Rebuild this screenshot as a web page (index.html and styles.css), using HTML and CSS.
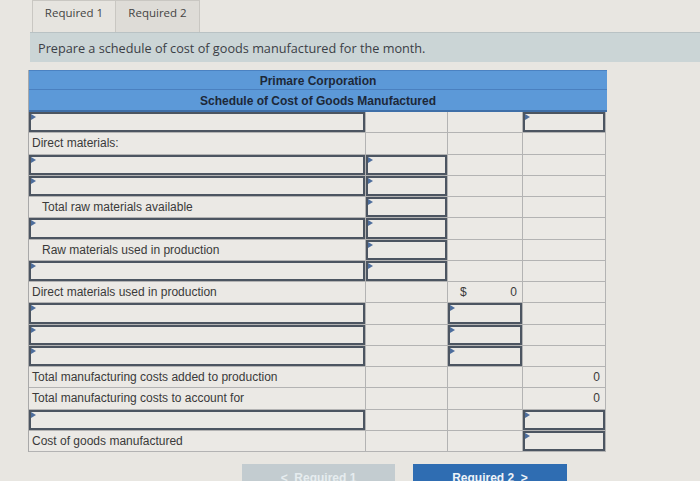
FILE: index.html
```html
<!DOCTYPE html>
<html>
<head>
<meta charset="utf-8">
<link rel="stylesheet" href="styles.css">
</head>
<body>
<div class="tabs">
  <div class="tab active">Required 1</div>
  <div class="tab">Required 2</div>
</div>
<div class="instr">Prepare a schedule of cost of goods manufactured for the month.</div>
<div class="sheet">
  <div class="hdr hdr1">Primare Corporation</div>
  <div class="hdr hdr2">Schedule of Cost of Goods Manufactured</div>
  <div class="row"><div class="c in"></div><div class="c"></div><div class="c"></div><div class="c in"></div></div>
  <div class="row"><div class="c lbl">Direct materials:</div><div class="c"></div><div class="c"></div><div class="c"></div></div>
  <div class="row"><div class="c in"></div><div class="c in"></div><div class="c"></div><div class="c"></div></div>
  <div class="row"><div class="c in"></div><div class="c in"></div><div class="c"></div><div class="c"></div></div>
  <div class="row"><div class="c lbl ind">Total raw materials available</div><div class="c in"></div><div class="c"></div><div class="c"></div></div>
  <div class="row"><div class="c in"></div><div class="c in"></div><div class="c"></div><div class="c"></div></div>
  <div class="row"><div class="c lbl ind">Raw materials used in production</div><div class="c in"></div><div class="c"></div><div class="c"></div></div>
  <div class="row"><div class="c in"></div><div class="c in"></div><div class="c"></div><div class="c"></div></div>
  <div class="row"><div class="c lbl">Direct materials used in production</div><div class="c"></div><div class="c num"><span>$</span><span>0</span></div><div class="c"></div></div>
  <div class="row"><div class="c in"></div><div class="c"></div><div class="c in"></div><div class="c"></div></div>
  <div class="row"><div class="c in"></div><div class="c"></div><div class="c in"></div><div class="c"></div></div>
  <div class="row"><div class="c in"></div><div class="c"></div><div class="c in"></div><div class="c"></div></div>
  <div class="row"><div class="c lbl">Total manufacturing costs added to production</div><div class="c"></div><div class="c"></div><div class="c num r"><span>0</span></div></div>
  <div class="row"><div class="c lbl">Total manufacturing costs to account for</div><div class="c"></div><div class="c"></div><div class="c num r"><span>0</span></div></div>
  <div class="row"><div class="c in"></div><div class="c"></div><div class="c"></div><div class="c in"></div></div>
  <div class="row"><div class="c lbl">Cost of goods manufactured</div><div class="c"></div><div class="c"></div><div class="c in"></div></div>
</div>
<div class="nav">
  <div class="btn prev">&lt;&nbsp;&nbsp;Required 1</div>
  <div class="btn next">Required 2&nbsp;&nbsp;&gt;</div>
</div>
</body>
</html>
```
FILE: styles.css
```css
html { overflow: hidden; }
body {
  margin: 0;
  background: #e8e6e1;
  font-family: "Open Sans", "Liberation Sans", sans-serif;
  width: 700px;
  height: 481px;
}
.tabs {
  display: flex;
  padding-left: 32px;
  height: 32px;
}
.tab {
  width: 84px;
  height: 32px;
  box-sizing: border-box;
  border: 1px solid #c9c7c2;
  border-bottom: none;
  background: #dedcd7;
  color: #444;
  font-size: 11.5px;
  text-align: center;
  line-height: 24px;
}
.tab.active {
  background: #e6e4df;
}
.tab + .tab { border-left: none; }
.instr {
  margin-left: 30px;
  height: 30px;
  background: #cbd5d6;
  border-top: 1px solid #b9c2c4;
  box-sizing: border-box;
  padding-left: 8px;
  line-height: 30px;
  font-size: 12.7px;
  color: #3b4046;
}
.sheet {
  margin: 8px 0 0 28px;
  width: 578px;
  border-left: 1px solid #a9a9a9;
  font-family: "Liberation Sans", Arial, sans-serif;
}
.hdr {
  background: #5c99d8;
  color: #1c2838;
  font-weight: bold;
  font-size: 12px;
  text-align: center;
}
.hdr1 {
  height: 20px;
  line-height: 20px;
  border-top: 1px solid #4b82c2;
  box-sizing: border-box;
  border-bottom: 1px solid #4a80c0;
}
.hdr2 {
  height: 22px;
  line-height: 22px;
  border-bottom: 2px solid #3f6fa8;
  box-sizing: border-box;
}
.row {
  display: grid;
  grid-template-columns: 337px 82px 75px 83px;
  height: 21.25px;
}
.c {
  position: relative;
  box-sizing: border-box;
  background: #ebe9e5;
  border-right: 1px solid #b3b3b3;
  border-bottom: 1px solid #b3b3b3;
  font-size: 12px;
  color: #3a3a3a;
  line-height: 20px;
  white-space: nowrap;
}
.c.in {
  box-shadow: inset 0 0 0 2px #4c5561;
}
.c.in::before {
  content: "";
  position: absolute;
  left: 2px;
  top: 2px;
  border-top: 3px solid transparent;
  border-bottom: 3px solid transparent;
  border-left: 5px solid #4d6d9c;
}
.lbl { padding-left: 3px; }
.lbl.ind { padding-left: 13px; }
.num {
  display: flex;
  justify-content: space-between;
  padding: 0 5px 0 12px;
}
.num.r { justify-content: flex-end; }
.nav {
  display: flex;
  margin: 12px 0 0 242px;
  gap: 18px;
}
.btn {
  height: 30px;
  line-height: 28px;
  font-size: 12px;
  font-weight: bold;
  text-align: center;
  font-family: "Liberation Sans", Arial, sans-serif;
  box-sizing: border-box;
}
.prev {
  width: 153px;
  background: #c3ccd0;
  color: #e6ecef;
}
.next {
  width: 154px;
  background: #2f6db2;
  color: #eef3f8;
}
```
